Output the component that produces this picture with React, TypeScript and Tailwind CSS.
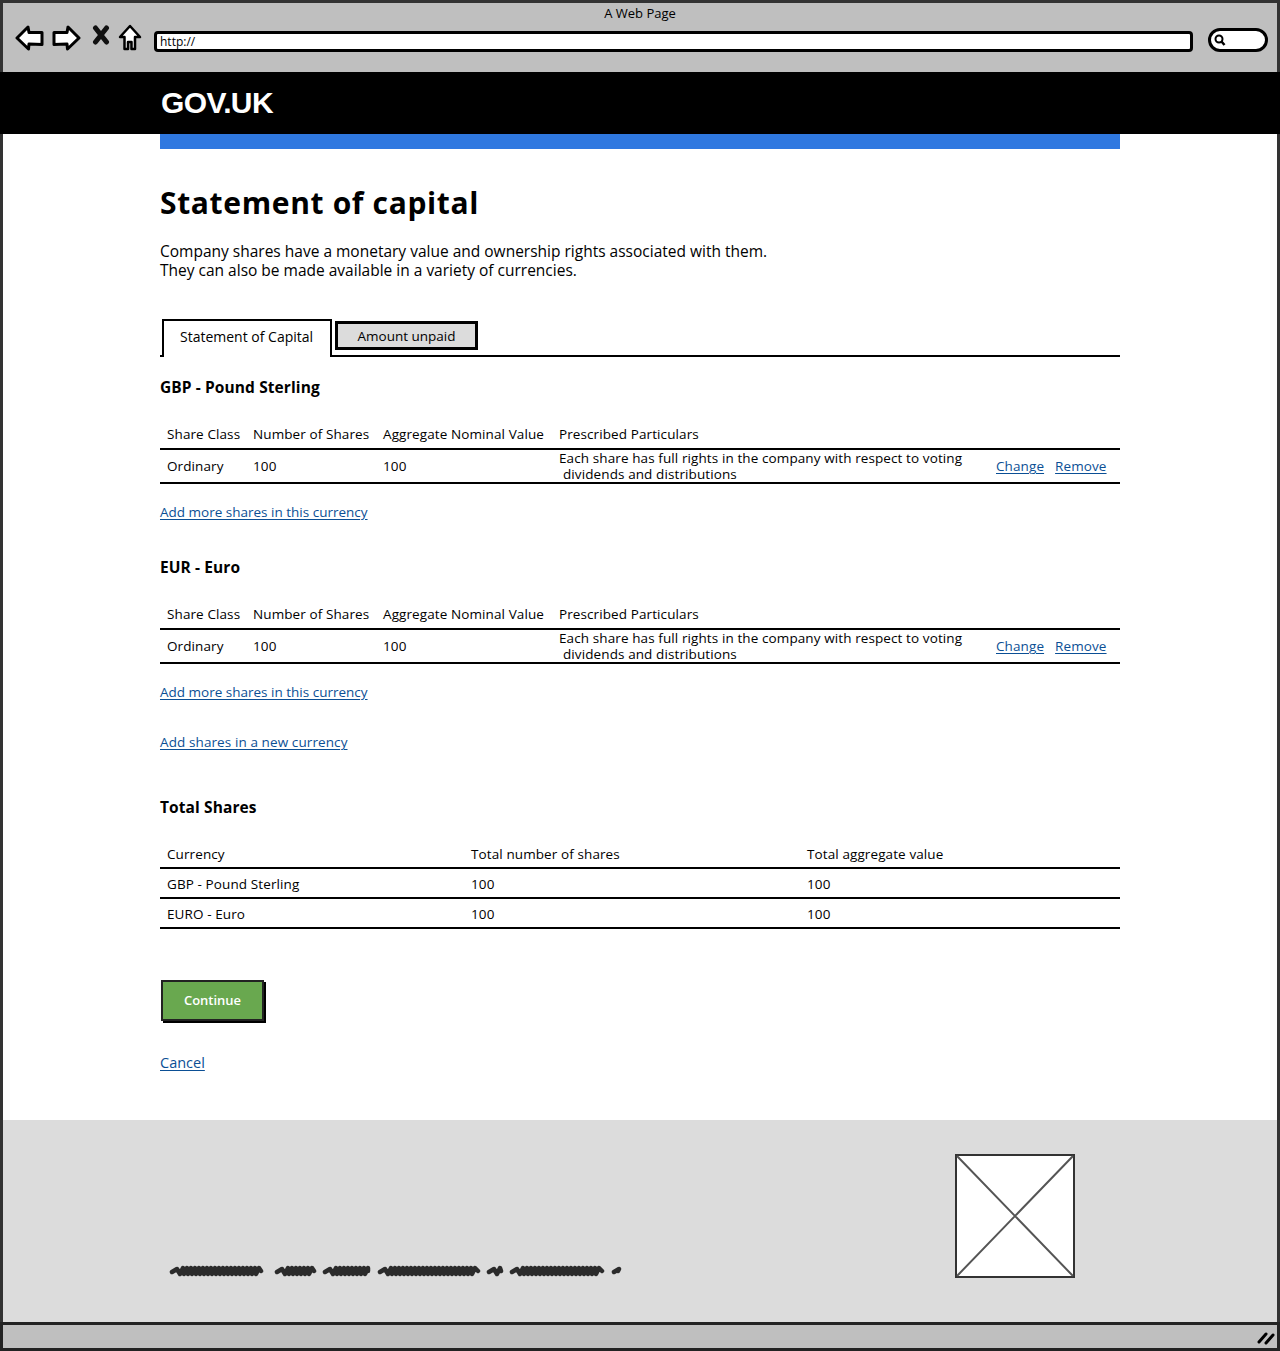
const font = "[font-family:'Open_Sans','Liberation_Sans',sans-serif]";

function Arrow({ flip }: { flip?: boolean }) {
  return (
    <svg width="29" height="26" viewBox="0 0 29 26" className={flip ? "-scale-x-100" : ""}>
      <path d="M2 13 L13 2 L14 7.5 L27 7.5 L27 19.5 L14 19 L13.5 24 Z" fill="#fff" stroke="#000" strokeWidth="3" strokeLinejoin="round" />
    </svg>
  );
}

function BrowserChrome() {
  return (
    <div className="h-[72px] border-[3px] border-b-0 border-[#333] bg-[#bfbfbf] flex flex-col">
      <p className="text-[13px] leading-[18px] mt-[1px] text-center text-black">A Web Page</p>
      <div className="flex items-center h-[30px] mt-[1px] pl-[12px] pr-[9px]">
        <Arrow />
        <div className="w-[8px]" />
        <Arrow flip />
        <svg width="18" height="20" viewBox="0 0 18 20" className="ml-[11px] mb-[6px]">
          <path d="M3.5 3 L14.5 17 M14.5 3 L3.5 17" stroke="#111" strokeWidth="5" strokeLinecap="round" />
        </svg>
        <svg width="24" height="28" viewBox="0 0 24 28" className="ml-[8px]">
          <path d="M12 2 L22 13 L17 13 L17 25 L13.5 25 L13.5 18 L10 18 L10 25 L6.5 25 L6.5 13 L2 13 Z" fill="#fff" stroke="#000" strokeWidth="2.5" strokeLinejoin="round" />
        </svg>
        <div className="ml-[12px] mt-[7px] w-[1039px] h-[21px] bg-white border-[3px] border-black rounded-[4px] text-[12px] leading-[15px] pl-[3px] text-black">http://</div>
        <div className="ml-[15px] mt-[3px] w-[60px] h-[24px] bg-white border-[3px] border-black rounded-[12px] flex items-center pl-[2px]">
          <svg width="13" height="13" viewBox="0 0 13 13">
            <circle cx="6" cy="6" r="3.5" fill="none" stroke="#000" strokeWidth="2" />
            <path d="M8.5 8.5 L11.5 12" stroke="#000" strokeWidth="2.5" />
          </svg>
        </div>
      </div>
    </div>
  );
}

function TextLink({ children }: { children: string }) {
  return <a className="text-[#0b4f95] underline underline-offset-2 decoration-1">{children}</a>;
}

function ShareTable() {
  return (
    <table className="w-full table-fixed text-[13.5px] tracking-[0.1px] text-black border-collapse">
      <colgroup>
        <col className="w-[93px]" />
        <col className="w-[130px]" />
        <col className="w-[176px]" />
        <col className="w-[437px]" />
        <col />
      </colgroup>
      <thead>
        <tr className="h-[32px] border-b-2 border-black">
          <th className="font-normal text-left pl-[7px] pt-[4px] whitespace-nowrap">Share Class</th>
          <th className="font-normal text-left pt-[4px] whitespace-nowrap">Number of Shares</th>
          <th className="font-normal text-left pt-[4px] whitespace-nowrap">Aggregate Nominal Value</th>
          <th className="font-normal text-left pt-[4px] whitespace-nowrap">Prescribed Particulars</th>
          <th />
        </tr>
      </thead>
      <tbody>
        <tr className="h-[34px] border-b-2 border-black">
          <td className="pl-[7px]">Ordinary</td>
          <td>100</td>
          <td>100</td>
          <td className="leading-[16px] whitespace-nowrap">
            Each share has full rights in the company with respect to voting
            <br />
            <span className="pl-[4px]">dividends and distributions</span>
          </td>
          <td>
            <span className="flex gap-[11px] whitespace-nowrap">
              <TextLink>Change</TextLink>
              <TextLink>Remove</TextLink>
            </span>
          </td>
        </tr>
      </tbody>
    </table>
  );
}

function CurrencyBlock({ name }: { name: string }) {
  return (
    <section>
      <h2 className="text-[15.5px] tracking-[0.1px] leading-[22px] font-bold text-black">{name}</h2>
      <div className="mt-[19px]">
        <ShareTable />
      </div>
      <p className="mt-[18px] text-[13.5px] leading-[20px]">
        <TextLink>Add more shares in this currency</TextLink>
      </p>
    </section>
  );
}

function TotalsTable() {
  const rows = [
    ["GBP - Pound Sterling", "100", "100"],
    ["EURO - Euro", "100", "100"],
  ];
  return (
    <table className="w-full table-fixed text-[13.5px] tracking-[0.1px] text-black border-collapse">
      <colgroup>
        <col className="w-[311px]" />
        <col className="w-[336px]" />
        <col />
      </colgroup>
      <thead>
        <tr className="h-[30px] border-b-2 border-black">
          <th className="font-normal text-left pl-[7px] pt-[4px]">Currency</th>
          <th className="font-normal text-left pt-[4px]">Total number of shares</th>
          <th className="font-normal text-left pt-[4px]">Total aggregate value</th>
        </tr>
      </thead>
      <tbody>
        {rows.map((row) => (
          <tr key={row[0]} className="h-[30px] border-b-2 border-black">
            <td className="pl-[7px] pt-[2px]">{row[0]}</td>
            <td className="pt-[2px]">{row[1]}</td>
            <td className="pt-[2px]">{row[2]}</td>
          </tr>
        ))}
      </tbody>
    </table>
  );
}

function Scribble() {
  const segments: [number, number][] = [
    [3, 92],
    [108, 145],
    [156, 199],
    [211, 309],
    [320, 332],
    [343, 433],
    [445, 449],
  ];
  return (
    <svg width="460" height="16" viewBox="0 0 460 16">
      {segments.map(([a, b]) => {
        let d = `M${a} 9 L${a + 5} 6`;
        for (let x = a + 8; x < b - 2; x += 4) d += ` L${x} 11 L${x + 3} 5`;
        return <path key={a} d={`${d} L${b} 8`} fill="none" stroke="#2b2b2b" strokeWidth="4.5" strokeLinejoin="round" strokeLinecap="round" />;
      })}
    </svg>
  );
}

export default function App() {
  return (
    <div className={`${font} w-[1280px] h-[1351px] flex flex-col overflow-hidden bg-white`}>
      <BrowserChrome />
      <header className="h-[62px] bg-black flex items-center pl-[161px] pb-[2px]">
        <span className="[font-family:'Liberation_Sans',sans-serif] text-[30px] font-bold tracking-[-0.6px] text-white">GOV.UK</span>
      </header>
      <main className="h-[986px] border-x-[3px] border-[#333] px-[157px]">
        <div className="h-[15px] bg-[#2f78e0]" />
        <h1 className="mt-[34px] text-[30px] leading-[40px] font-bold tracking-[0.65px] text-black">Statement of capital</h1>
        <p className="mt-[19px] text-[15.5px] leading-[19px] text-black">
          Company shares have a monetary value and ownership rights associated with them.
          <br />
          They can also be made available in a variety of currencies.
        </p>

        <div className="mt-[39px] h-[38px] flex items-end border-b-2 border-black text-[14px] text-black">
          <div className="h-[38px] w-[170px] -mb-[2px] ml-[2px] pb-[6px] bg-white border-x-2 border-t-2 border-black flex items-center pl-[16px]">Statement of Capital</div>
          <div className="h-[29px] w-[143px] ml-[3px] mb-[5px] pt-[2px] bg-[#dcdcdc] border-[3px] border-black flex items-center justify-center text-[13.5px]">Amount unpaid</div>
        </div>

        <div className="mt-[19px]">
          <CurrencyBlock name="GBP - Pound Sterling" />
        </div>
        <div className="mt-[34px]">
          <CurrencyBlock name="EUR - Euro" />
        </div>
        <p className="mt-[30px] text-[13.5px] tracking-[0.1px] leading-[20px]">
          <TextLink>Add shares in a new currency</TextLink>
        </p>

        <h2 className="mt-[44px] text-[15.5px] tracking-[0.1px] leading-[22px] font-bold text-black">Total Shares</h2>
        <div className="mt-[20px]">
          <TotalsTable />
        </div>

        <button className="mt-[51px] ml-[1px] w-[103px] h-[41px] pt-[1px] bg-[#69a84f] border-2 border-[#222] shadow-[2px_2px_0_#000] text-white text-[13px] font-semibold block">Continue</button>
        <p className="mt-[32px] text-[14.5px] leading-[20px]">
          <TextLink>Cancel</TextLink>
        </p>
      </main>
      <footer className="h-[202px] border-x-[3px] border-[#333] bg-[#dcdcdc] flex items-end justify-between pb-[44px] pl-[166px] pr-[202px]">
        <div className="mb-[-1px]">
          <Scribble />
        </div>
        <svg width="120" height="124" viewBox="0 0 120 124">
          <rect x="1" y="1" width="118" height="122" fill="#fff" stroke="#333" strokeWidth="2" />
          <path d="M2 2 L118 122 M118 2 L2 122" stroke="#555" strokeWidth="2" />
        </svg>
      </footer>
      <div className="h-[29px] border-[3px] border-[#222] bg-[#bfbfbf] flex items-center justify-end pr-[2px]">
        <svg width="18" height="16" viewBox="0 0 18 16">
          <path d="M2 13 L9 5 M9 14 L16 6" stroke="#000" strokeWidth="3" strokeLinecap="round" />
        </svg>
      </div>
    </div>
  );
}
